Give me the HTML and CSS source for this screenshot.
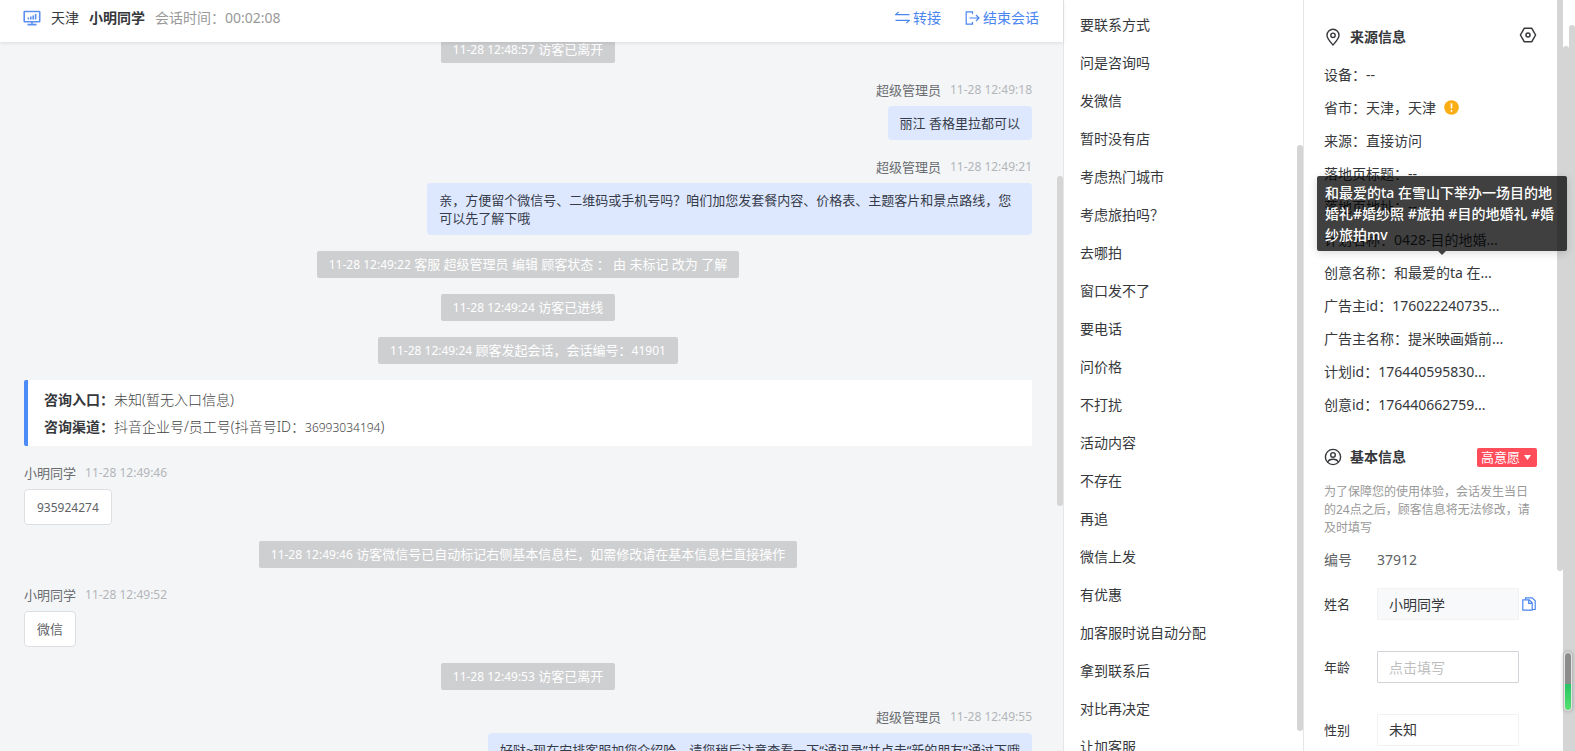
FILE: index.html
```html
<!DOCTYPE html>
<html lang="zh-CN">
<head>
<meta charset="utf-8">
<title>客服会话</title>
<link rel="stylesheet" href="styles.css">
</head>
<body>
<div class="app">
  <main class="chat">
    <header class="chat-header">
      <svg class="icon-monitor" viewBox="0 0 18 16" width="18" height="16" fill="none" stroke="currentColor" stroke-width="1.6"><rect x="1.2" y="1.5" width="15.500" height="10.300" rx=".6"/><path d="M9 12v2.500M4.500 14.600h9M5.400 9.600V7.400M7.800 9.600V6.400M10.200 9.600V5.500M12.600 9.600V4"/></svg>
      <span class="city">天津</span>
      <h1 class="visitor">小明同学</h1>
      <span class="duration">会话时间：00:02:08</span>
      <div class="actions">
        <button class="action" type="button">
          <svg viewBox="0 0 15 14" width="15" height="14" fill="none" stroke="currentColor" stroke-width="1.2"><path d="M3.600 .8L.8 3.600h13.700M11.400 12.200l2.800-2.800H.5"/></svg>转接
        </button>
        <button class="action" type="button">
          <svg viewBox="0 0 15 14" width="15" height="14" fill="none" stroke="currentColor" stroke-width="1.2"><path d="M7.500 3V.8H1.200v12.400h6.300V11M4.500 7H14M11 4l3 3-3 3"/></svg>结束会话
        </button>
      </div>
    </header>
    <div class="chat-body">
      <div class="messages">
        <p class="notice"><time>11-28 12:48:57</time> 访客已离开</p>
        <article class="message mine">
          <div class="meta"><span>超级管理员</span><time>11-28 12:49:18</time></div>
          <p class="bubble">丽江 香格里拉都可以</p>
        </article>
        <article class="message mine">
          <div class="meta"><span>超级管理员</span><time>11-28 12:49:21</time></div>
          <p class="bubble">亲，方便留个微信号、二维码或手机号吗？咱们加您发套餐内容、价格表、主题客片和景点路线，您可以先了解下哦</p>
        </article>
        <p class="notice"><time>11-28 12:49:22</time> 客服 超级管理员 编辑 顾客状态 ： 由 未标记 改为 了解</p>
        <p class="notice"><time>11-28 12:49:24</time> 访客已进线</p>
        <p class="notice"><time>11-28 12:49:24</time> 顾客发起会话，会话编号：<span class="num">41901</span></p>
        <dl class="entry">
          <div><dt>咨询入口：</dt><dd>未知(暂无入口信息)</dd></div>
          <div><dt>咨询渠道：</dt><dd>抖音企业号/员工号(抖音号ID：<span class="num">36993034194</span>)</dd></div>
        </dl>
        <article class="message">
          <div class="meta"><span>小明同学</span><time>11-28 12:49:46</time></div>
          <p class="bubble"><span class="num">935924274</span></p>
        </article>
        <p class="notice"><time>11-28 12:49:46</time> 访客微信号已自动标记右侧基本信息栏，如需修改请在基本信息栏直接操作</p>
        <article class="message">
          <div class="meta"><span>小明同学</span><time>11-28 12:49:52</time></div>
          <p class="bubble">微信</p>
        </article>
        <p class="notice"><time>11-28 12:49:53</time> 访客已离开</p>
        <article class="message mine">
          <div class="meta"><span>超级管理员</span><time>11-28 12:49:55</time></div>
          <p class="bubble">好哒~现在安排客服加您介绍哈，请您稍后注意查看一下“通讯录”并点击“新的朋友”通过下哦</p>
        </article>
      </div>
    </div>
    <div class="thumb thumb-chat"></div>
  </main>

  <nav class="phrases" aria-label="快捷回复">
    <ul>
      <li><button type="button">要联系方式</button></li>
      <li><button type="button">问是咨询吗</button></li>
      <li><button type="button">发微信</button></li>
      <li><button type="button">暂时没有店</button></li>
      <li><button type="button">考虑热门城市</button></li>
      <li><button type="button">考虑旅拍吗？</button></li>
      <li><button type="button">去哪拍</button></li>
      <li><button type="button">窗口发不了</button></li>
      <li><button type="button">要电话</button></li>
      <li><button type="button">问价格</button></li>
      <li><button type="button">不打扰</button></li>
      <li><button type="button">活动内容</button></li>
      <li><button type="button">不存在</button></li>
      <li><button type="button">再追</button></li>
      <li><button type="button">微信上发</button></li>
      <li><button type="button">有优惠</button></li>
      <li><button type="button">加客服时说自动分配</button></li>
      <li><button type="button">拿到联系后</button></li>
      <li><button type="button">对比再决定</button></li>
      <li><button type="button">让加客服</button></li>
    </ul>
    <div class="thumb thumb-phrases"></div>
  </nav>

  <aside class="profile">
    <section class="source">
      <div class="section-head">
        <svg viewBox="0 0 18 18" width="18" height="18" fill="none" stroke="currentColor" stroke-width="1.4"><path d="M9 17C5.500 13.200 3 10.600 3 7.300a6 6 0 0 1 12 0C15 10.600 12.500 13.200 9 17z"/><circle cx="9" cy="7.300" r="2.200"/></svg>
        <h2>来源信息</h2>
        <button class="settings" type="button" aria-label="设置">
          <svg viewBox="0 0 18 18" width="18" height="18" fill="none" stroke="currentColor" stroke-width="1.500" stroke-linejoin="round"><path d="M5.200 2.300h7.600L16.600 9l-3.800 6.700H5.200L1.400 9z"/><circle cx="9" cy="9" r="2"/></svg>
        </button>
      </div>
      <ul class="facts">
        <li>设备：--</li>
        <li>省市：天津，天津 <svg class="warn" viewBox="0 0 15 15" width="15" height="15"><circle cx="7.500" cy="7.500" r="7.300" fill="#faad14"/><path d="M7.500 3.200v5.200M7.500 9.900v1.800" stroke="#fff" stroke-width="1.600"/></svg></li>
        <li>来源：直接访问</li>
        <li>落地页标题：--</li>
        <li>落地页地址：--</li>
        <li>计划名称：0428-目的地婚...</li>
        <li class="with-tip">创意名称：和最爱的ta 在...
          <div class="tooltip" role="tooltip">和最爱的ta 在雪山下举办一场目的地婚礼#婚纱照 #旅拍 #目的地婚礼 #婚纱旅拍mv</div>
        </li>
        <li>广告主id：176022240735...</li>
        <li>广告主名称：提米映画婚前...</li>
        <li>计划id：176440595830...</li>
        <li>创意id：176440662759...</li>
      </ul>
    </section>
    <section class="basic">
      <div class="section-head">
        <svg viewBox="0 0 18 18" width="18" height="18" fill="none" stroke="currentColor" stroke-width="1.400"><circle cx="9" cy="9" r="7.600"/><circle cx="9" cy="6.900" r="2.300"/><path d="M3.700 14.200c.8-2.500 2.600-3 5.300-3s4.500.5 5.300 3"/></svg>
        <h2>基本信息</h2>
        <button class="intent" type="button">高意愿<svg viewBox="0 0 8 5" width="8" height="5"><path d="M0 0h7L3.500 5z" fill="#fff"/></svg></button>
      </div>
      <p class="hint">为了保障您的使用体验，会话发生当日的24点之后，顾客信息将无法修改，请及时填写</p>
      <div class="serial"><span>编号</span><span>37912</span></div>
      <div class="field">
        <label for="name">姓名</label>
        <input class="control filled" id="name" type="text" value="小明同学">
        <button class="copy" type="button" aria-label="复制">
          <svg viewBox="0 0 14 14" width="14" height="14" fill="none" stroke="currentColor" stroke-width="1.200"><path d="M.8 2.800h6.400l3 3v7.400H.8zM6.700 3v3.400h3.300"/><path d="M3.500 2.600V.8h6.700l3 3v8.700h-2.800"/></svg>
        </button>
      </div>
      <div class="field">
        <label for="age">年龄</label>
        <input class="control outlined" id="age" type="text" placeholder="点击填写">
      </div>
      <div class="field">
        <label for="gender">性别</label>
        <select class="control" id="gender"><option>未知</option></select>
      </div>
    </section>
    <div class="thumb thumb-profile"></div>
  </aside>

  <div class="rails">
    <div class="rail rail-inner"></div>
    <div class="rail rail-outer"></div>
    <div class="level"></div>
  </div>
</div>
</body>
</html>
```
FILE: styles.css
```css
* { box-sizing: border-box; }

body {
  margin: 0;
  font-family: "Noto Sans", "Noto Sans CJK SC", sans-serif;
  font-size: 14px;
  line-height: 22px;
  color: #36383c;
  background: #fff;
}

h1, h2, p, ul, dl, dd { margin: 0; padding: 0; }
ul { list-style: none; }

button, input, select {
  font: inherit;
  color: inherit;
  border: 0;
  margin: 0;
  padding: 0;
  background: none;
}

.app {
  display: grid;
  grid-template-columns: minmax(0, 1fr) 240px 260px 12px;
  grid-template-rows: minmax(0, 1fr);
  height: 100vh;
  overflow: hidden;
}

.thumb {
  position: absolute;
  right: 0;
  width: 6px;
  border-radius: 3px;
  background: #d5d5d5;
}

/* Conversation */
.chat {
  position: relative;
  display: flex;
  flex-direction: column;
  min-width: 0;
  background: #f3f5f7;
}

.chat-header {
  z-index: 1;
  display: flex;
  align-items: center;
  flex: none;
  height: 42px;
  padding: 0 24px 6px 23px;
  background: #fff;
  box-shadow: 0 1px 4px rgba(0, 0, 0, .1);
}

.icon-monitor { color: #5b8ff0; margin-right: 10px; }
.visitor { margin: 0 10px; font-size: 14px; font-weight: 700; }
.duration { color: #999; }
.actions { display: flex; gap: 24px; margin-left: auto; }

.action {
  display: flex;
  align-items: center;
  gap: 3px;
  color: #4a86f0;
  cursor: pointer;
}

.chat-body { flex: 1; min-height: 0; overflow: hidden; }

.messages {
  display: flex;
  flex-direction: column;
  gap: 16px;
  margin-top: -6px;
  padding: 0 31px 0 24px;
  font-size: 13px;
}

.messages time, .num { font-size: 12px; }
.notice time, .num { line-height: 1; }

.notice {
  align-self: center;
  padding: 4px 12px;
  line-height: 19px;
  color: #fff;
  background: #cecfd1;
  border-radius: 2px;
}

.message { display: flex; flex-direction: column; align-items: flex-start; }
.mine { align-items: flex-end; }

.meta {
  display: flex;
  gap: 9px;
  margin-bottom: 5px;
  color: #6a6c70;
}
.meta time { color: #b4b6ba; }

.bubble {
  max-width: 60%;
  padding: 8px 12px;
  line-height: 18px;
  color: #606266;
  background: #fff;
  border: 1px solid #dcdee2;
  border-radius: 4px;
}

.mine .bubble {
  color: #363b4a;
  background: #dde8fe;
  border: 0;
}

.entry {
  padding: 6px 16px;
  font-size: 14px;
  line-height: 27px;
  background: #fff;
  border-left: 4px solid #4d8cf8;
  border-radius: 2px;
}
.entry div { display: flex; }
.entry dt { font-weight: 700; }
.entry dd { font-weight: 300; color: #444; }

.thumb-chat { top: 176px; height: 44%; }

/* Quick phrases */
.phrases {
  position: relative;
  padding: 6px 16px 0;
  overflow: hidden;
  border-left: 1px solid #e6e6e6;
}
.phrases button {
  display: block;
  width: 100%;
  line-height: 38px;
  text-align: left;
  cursor: pointer;
}
.thumb-phrases { top: 145px; height: 78%; }

/* Visitor profile */
.profile {
  position: relative;
  padding: 26px 26px 0 20px;
  border-left: 1px solid #e6e6e6;
}

.section-head { display: flex; align-items: center; gap: 8px; }
.section-head h2 { font-size: 14px; font-weight: 700; }
.settings { margin-left: auto; height: 22px; cursor: pointer; }

.facts { margin-top: 10px; line-height: 33px; }
.warn { margin-left: 4px; vertical-align: -2px; }

.with-tip { position: relative; }

.tooltip {
  position: absolute;
  z-index: 2;
  bottom: calc(100% + 5px);
  left: -7px;
  width: 250px;
  padding: 6px 8px;
  line-height: 21px;
  font-weight: 500;
  color: #fff;
  background: rgba(0, 0, 0, .75);
  border-radius: 2px;
  box-shadow: 0 2px 8px rgba(0, 0, 0, .15);
}
.tooltip::after {
  content: "";
  position: absolute;
  top: 100%;
  left: 50%;
  margin-left: -4px;
  border: 4px solid transparent;
  border-top-color: #404040;
  border-bottom: 0;
}

.basic { margin-top: 25px; }

.intent {
  display: flex;
  align-items: center;
  gap: 4px;
  height: 19px;
  margin-left: auto;
  padding: 0 5px 0 4px;
  font-size: 13px;
  line-height: 19px;
  color: #fff;
  background: #ff4d5a;
  border-radius: 2px;
  cursor: pointer;
}

.hint {
  margin-top: 15px;
  font-size: 12px;
  line-height: 18px;
  color: #999;
}

.serial {
  display: grid;
  grid-template-columns: 53px 1fr;
  margin-top: 12px;
  color: #606266;
}

.field {
  display: grid;
  grid-template-columns: 53px 142px 1fr;
  align-items: center;
  margin-top: 17px;
}
.field + .field { margin-top: 31px; }
.field label { font-size: 13px; }

.control {
  width: 100%;
  height: 32px;
  padding: 0 11px;
  appearance: none;
  background: #fff;
  border: 1px solid #f2f2f2;
  border-radius: 1px;
}
.filled { background: #f8f9fa; }
.outlined { border-color: #d0d3d8; }
.control::placeholder { color: #bfbfbf; opacity: 1; }

.copy { height: 14px; margin-left: 3px; line-height: 0; text-align: left; color: #4a86f0; cursor: pointer; }

.thumb-profile { top: 0; height: 76%; border-radius: 0 0 3px 3px; }

/* Page scroll rails */
.rails { position: relative; display: flex; }
.rail { width: 6px; background: #d5d5d5; border-radius: 3px 3px 0 0; }
.rail-inner { margin-top: 46px; }
.rail-outer { margin-top: 25px; }

.level {
  position: absolute;
  right: 3px;
  bottom: 40px;
  width: 8px;
  height: 59px;
  border: 1px solid #e0e4e0;
  border-radius: 4px;
  background: linear-gradient(#8c8c8c 0 54%, #27c464 54%, #55e070);
  box-shadow: 0 0 4px rgba(0, 0, 0, .3);
}
```
